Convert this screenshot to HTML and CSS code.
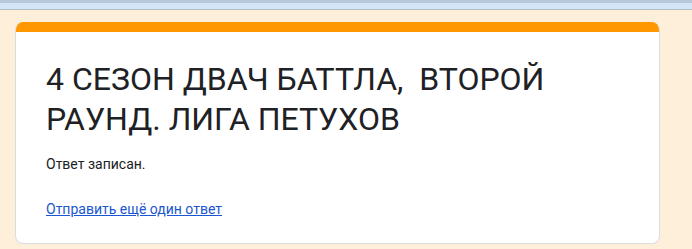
FILE: index.html
```html
<!DOCTYPE html>
<html lang="ru">
<head>
    <meta charset="utf-8" />
    <title>4 СЕЗОН ДВАЧ БАТТЛА</title>
    <meta name="viewport" content="width=device-width, initial-scale=1.0">
    <link rel="stylesheet" href="styles.css">
</head>
<body>

<div class="top-strip"></div>

<div class="page">
    <div class="card">
        <div class="card-accent"></div>
        <div class="card-body">
            <h1 class="form-title">4 СЕЗОН ДВАЧ БАТТЛА,&nbsp; ВТОРОЙ РАУНД. ЛИГА ПЕТУХОВ</h1>
            <p class="confirm">Ответ записан.</p>
            <a class="again" href="#">Отправить ещё один ответ</a>
        </div>
    </div>
</div>

</body>
</html>
```

FILE: styles.css
```css
* {
    margin: 0;
    padding: 0;
    box-sizing: border-box;
}

body {
    font-family: Roboto, Arial, sans-serif;
    background-color: #feefdb;
    color: #202124;
    height: 100vh;
    overflow: hidden;
}

.top-strip {
    height: 10px;
    background: #d2e6f8;
    border-top: 3px solid #b7c8db;
    border-bottom: 1px solid #b3bcc6;
}

.page {
    padding: 12px 32px 0 15px;
}

.card {
    width: 645px;
    background: #fff;
    border: 1px solid #dadce0;
    border-top: none;
    border-radius: 8px;
    overflow: hidden;
}

.card-accent {
    height: 10px;
    background: #ff9800;
    margin: 0 -1px;
}

.card-body {
    padding: 27px 30px 24px 30px;
}

.form-title {
    font-size: 32px;
    font-weight: 400;
    line-height: 40px;
    color: #202124;
    width: 520px;
}

.confirm {
    font-size: 14px;
    line-height: 20px;
    margin-top: 15px;
}

.again {
    display: inline-block;
    margin-top: 25px;
    font-size: 14px;
    line-height: 20px;
    color: #1a56cf;
    text-decoration: underline;
}
```
